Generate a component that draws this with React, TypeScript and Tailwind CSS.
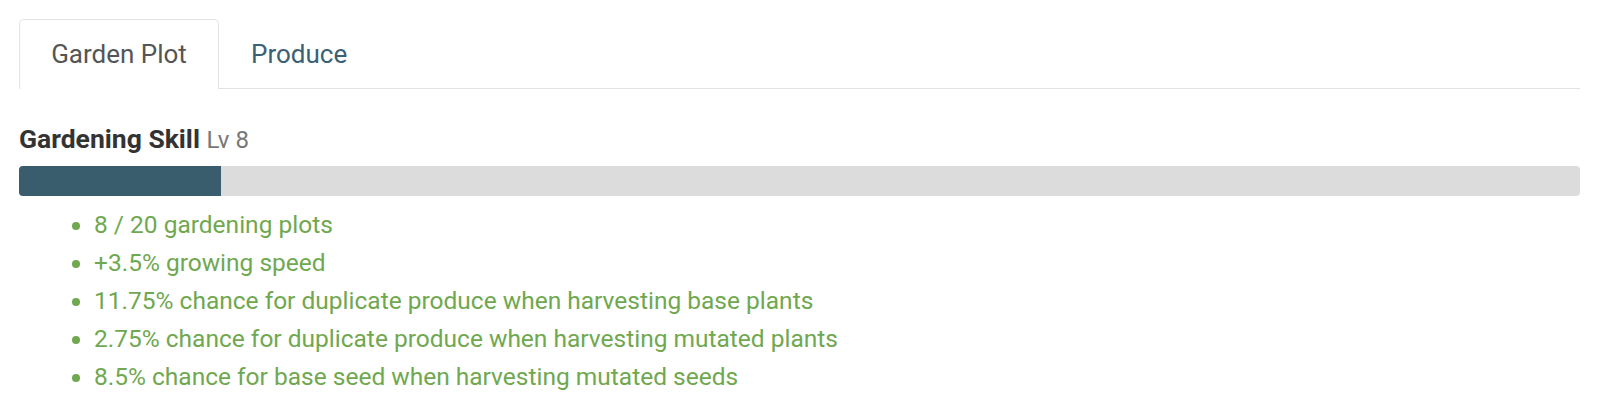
import { useState } from "react";

const perks = [
  "8 / 20 gardening plots",
  "+3.5% growing speed",
  "11.75% chance for duplicate produce when harvesting base plants",
  "2.75% chance for duplicate produce when harvesting mutated plants",
  "8.5% chance for base seed when harvesting mutated seeds",
];

function App() {
  const [tab, setTab] = useState("garden");
  const progress = 202 / 1561;

  return (
    <div className="bg-white min-h-[408px] pt-[19px] pl-[19px] pr-[20px] font-['Roboto',sans-serif]">
      <div className="flex border-b border-[#e3e3e3]">
        <button
          onClick={() => setTab("garden")}
          className={
            tab === "garden"
              ? "h-[70px] -mb-px w-[200px] border border-b-0 border-[#e3e3e3] rounded-t-[5px] bg-white text-[26px] text-[#555555]"
              : "h-[70px] -mb-px px-[31px] border border-transparent text-[26px] text-[#3b6074]"
          }
        >
          Garden Plot
        </button>
        <button
          onClick={() => setTab("produce")}
          className={
            tab === "produce"
              ? "h-[70px] -mb-px px-[31px] border border-b-0 border-[#e3e3e3] rounded-t-[5px] bg-white text-[26px] text-[#555555]"
              : "h-[70px] -mb-px px-[31px] border border-transparent text-[26px] text-[#3b6074]"
          }
        >
          Produce
        </button>
      </div>

      <div className="pt-[33px]">
        <h3 className="text-[26.5px] leading-[34px] text-[#333333]">
          <span className="font-bold">Gardening Skill</span>{" "}
          <span className="text-[24px] text-[#777777]">Lv 8</span>
        </h3>
        <div className="mt-[9px] h-[30px] rounded-[4px] bg-[#dcdcdc] overflow-hidden">
          <div className="h-full bg-[#3a5d6e]" style={{ width: `${progress * 100}%` }} />
        </div>
        <ul className="mt-[10px] pl-[75px] list-disc marker:text-[#6fa84f]">
          {perks.map((p) => (
            <li key={p} className="text-[24.5px] leading-[38px] text-[#6fa84f]">
              {p}
            </li>
          ))}
        </ul>
      </div>
    </div>
  );
}

export default App;
